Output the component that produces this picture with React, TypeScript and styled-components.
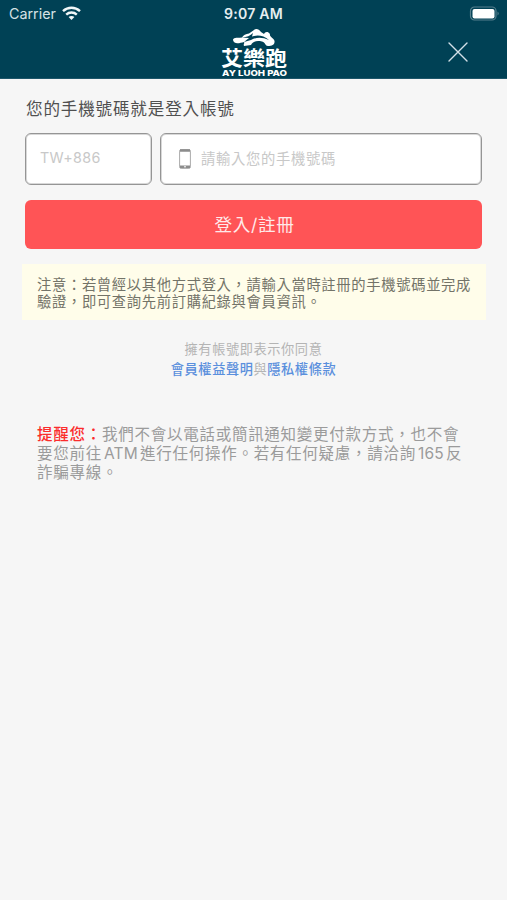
import React from "react";
import styled, { createGlobalStyle } from "styled-components";

const GlobalStyle = createGlobalStyle`
  *, *::before, *::after { box-sizing: border-box; }
  body {
    margin: 0;
    background: #f6f6f6;
    font-family: Inter, "Noto Sans CJK TC", sans-serif;
  }
`;

const Screen = styled.div`
  width: 100%;
  max-width: 507px;
  min-height: 900px;
  background: #f6f6f6;
`;

const Header = styled.header`
  height: 79px;
  background: #004155;
  color: #fff;
  border-bottom: 1px solid #1d566a;
`;

const StatusBar = styled.div`
  height: 28px;
  display: grid;
  grid-template-columns: 1fr auto 1fr;
  align-items: center;
  padding: 0 7px 0 9px;
`;

const Carrier = styled.div`
  display: flex;
  align-items: center;
  gap: 6px;
  font-size: 14.3px;
  line-height: 28px;
  color: #d5e1e5;

  svg { margin-top: -2px; }
`;

const Clock = styled.div`
  margin-left: -2px;
  font-size: 14.1px;
  font-weight: 600;
  line-height: 28px;
  letter-spacing: 0.25px;
  color: #e6eef0;
`;

const Battery = styled.svg`
  justify-self: end;
  display: block;
  margin-top: -2px;
`;

const NavBar = styled.nav`
  height: 50px;
  display: grid;
  grid-template-columns: 1fr 68px 1fr;
  align-items: start;
`;

const Logo = styled.svg`
  grid-column: 2;
  display: block;
`;

const CloseButton = styled.button`
  justify-self: end;
  display: flex;
  margin: 14px 39px 0 0;
  padding: 0;
  border: 0;
  background: none;
  color: #d3e0e8;
`;

const Content = styled.main`
  padding: 18px 25px 0;
`;

const Title = styled.h1`
  margin: 0 0 11px 1px;
  font-size: 16.6px;
  font-weight: 400;
  line-height: 25px;
  letter-spacing: 0.8px;
  color: #505050;
`;

const PhoneRow = styled.div`
  display: grid;
  grid-template-columns: 127px 1fr;
  gap: 8px;
`;

const Field = styled.div`
  height: 52px;
  display: flex;
  align-items: center;
  gap: 10px;
  padding: 0 0 4px ${(p: { $inset: number }) => p.$inset}px;
  border: 1px solid #959595;
  box-shadow: inset 0 0 0 1px #d8d8d8;
  border-radius: 6px;
  background: #fff;
  color: #c8c8c8;
  font-size: 14.3px;
  letter-spacing: 0.7px;
`;

const DialCode = styled.span`
  letter-spacing: 0.35px;
`;

const SubmitButton = styled.button`
  display: block;
  width: 100%;
  height: 49px;
  margin-top: 15px;
  padding: 0 0 2px 2px;
  border: 0;
  border-radius: 6px;
  background: #ff5456;
  color: #ffe9e9;
  font: inherit;
  font-size: 17.6px;
  letter-spacing: 0.7px;
`;

const Notice = styled.p`
  margin: 15px -4px 0 -3px;
  padding: 12px 10px 11px 15px;
  height: 56px;
  background: #fffdea;
  color: #737368;
  font-size: 14.3px;
  line-height: 17px;
  letter-spacing: 0.67px;
`;

const Consent = styled.p`
  margin: 19px 0 0;
  text-align: center;
  font-size: 13.2px;
  line-height: 20px;
  letter-spacing: 0.6px;
  color: #b4b4b4;
`;

const PolicyLink = styled.a`
  color: #5a8fdd;
  font-weight: 500;
`;

const Reminder = styled.p`
  margin: 46px 0 0 12px;
  font-size: 15.5px;
  line-height: 19px;
  letter-spacing: 0.74px;
  color: #9b9b9b;
`;

const Latin = styled.span`
  margin: 0 2px 0 2px;
  letter-spacing: 0.2px;
`;

const Warning = styled.strong`
  color: #fb2c2c;
  font-weight: 500;
`;

function WifiIcon() {
  return (
    <svg width="19" height="15" viewBox="0 0 19 15" fill="none" stroke="#f1f7f8" strokeWidth="2.4">
      <path d="M1 5.2C5.900.6 13.100.6 18 5.200" />
      <path d="M4.200 8.600C7.200 5.800 11.800 5.800 14.800 8.600" />
      <path d="M9.500 14 6.600 11.100C8.200 9.600 10.800 9.600 12.400 11.100Z" fill="#f1f7f8" stroke="none" />
    </svg>
  );
}

function BatteryIcon() {
  return (
    <Battery width="31" height="15" viewBox="0 0 31 15">
      <rect x="1.500" y="1" width="25.500" height="13" rx="4" fill="none" stroke="#557f8d" strokeWidth="1.200" />
      <rect x="3.500" y="3" width="22" height="9.500" rx="2" fill="#fff" />
      <path d="M28.500 5.500Q31 7.500 28.500 9.500Z" fill="#557f8d" />
    </Battery>
  );
}

function BrandLogo() {
  return (
    <Logo width="68" height="50" viewBox="0 0 68 50" fill="#fff">
      <path d="M13 12C13 9.500 16 10 22 9.500C23 7 26 6 29 5.500L34 2C36 0 39 1 41 4L44 6C45 3.500 48 3 50 6C49 9 54 10 54.500 13C55 16.500 52 18 48 18C45 18 46 15 42 13.500C37 12.500 33 13 31 17L24 18C23 16 25 15 24 14C20 15 14 17 13 12Z" />
      <path d="M22 9.500Q29 9 33 5L32 8.500Q41 5.500 49 12Q39 7.500 31 12L24 14L29 10Z" fill="#004155" />
      <text x="1" y="38" textLength="66" lengthAdjust="spacingAndGlyphs" fontFamily="Noto Sans CJK TC, sans-serif" fontWeight="700" fontSize="20.500">艾樂跑</text>
      <text x="2" y="48.200" textLength="65" lengthAdjust="spacingAndGlyphs" fontFamily="Inter, sans-serif" fontWeight="800" fontSize="8">AY LUOH PAO</text>
    </Logo>
  );
}

function CloseIcon() {
  return (
    <svg width="20" height="20" viewBox="0 0 20 20" fill="none" stroke="currentColor" strokeWidth="1.400" strokeLinecap="round">
      <path d="M1 1 19 19M19 1 1 19" />
    </svg>
  );
}

function PhoneIcon() {
  return (
    <svg width="12" height="20" viewBox="0 0 12 20" fill="none">
      <rect x=".6" y=".6" width="10.800" height="18.800" rx="1.500" stroke="#aaa" />
      <path d="M1 1.500H11M1 17.800H11" stroke="#8c8c8c" strokeWidth="2.600" />
      <path d="M5 17.800H7" stroke="#fff" />
    </svg>
  );
}

const PhonePrompt = styled.div`
  display: flex;
  align-items: center;
  gap: 10px;

  svg { margin-top: 3px; }
`;

export default function App() {
  return (
    <>
      <GlobalStyle />
      <Screen>
        <Header>
          <StatusBar>
            <Carrier>Carrier <WifiIcon /></Carrier>
            <Clock>9:07 AM</Clock>
            <BatteryIcon />
          </StatusBar>
          <NavBar>
            <BrandLogo />
            <CloseButton aria-label="關閉"><CloseIcon /></CloseButton>
          </NavBar>
        </Header>
        <Content>
          <Title>您的手機號碼就是登入帳號</Title>
          <PhoneRow>
            <Field $inset={14}><DialCode>TW+886</DialCode></Field>
            <Field $inset={18}>
              <PhonePrompt><PhoneIcon />請輸入您的手機號碼</PhonePrompt>
            </Field>
          </PhoneRow>
          <SubmitButton>登入/註冊</SubmitButton>
          <Notice>
            注意：若曾經以其他方式登入，請輸入當時註冊的手機號碼並完成<br />
            驗證，即可查詢先前訂購紀錄與會員資訊。
          </Notice>
          <Consent>
            擁有帳號即表示你同意<br />
            <PolicyLink>會員權益聲明</PolicyLink>與<PolicyLink>隱私權條款</PolicyLink>
          </Consent>
          <Reminder>
            <Warning>提醒您：</Warning>我們不會以電話或簡訊通知變更付款方式，也不會<br />
            要您前往<Latin>ATM</Latin>進行任何操作。若有任何疑慮，請洽詢<Latin>165</Latin>反<br />
            詐騙專線。
          </Reminder>
        </Content>
      </Screen>
    </>
  );
}
